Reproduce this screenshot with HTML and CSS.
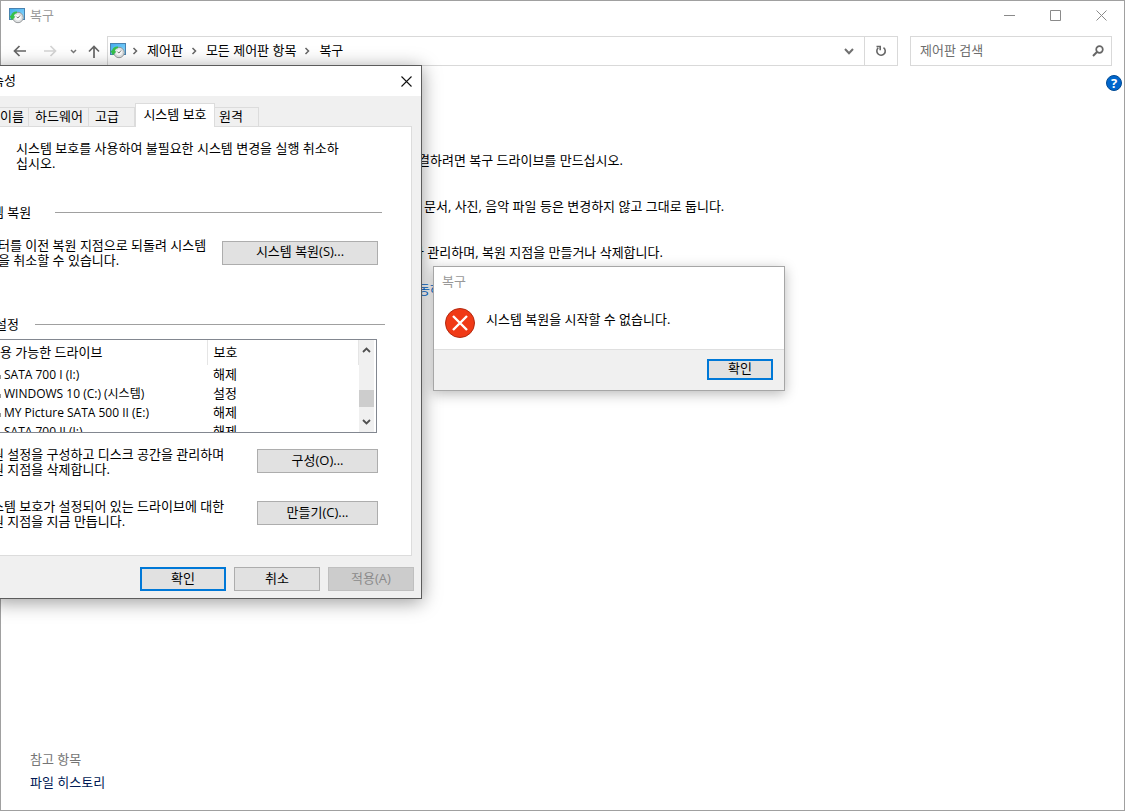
FILE: index.html
```html
<!DOCTYPE html>
<html lang="ko">
<head>
<meta charset="utf-8">
<title>복구</title>
<link rel="stylesheet" href="styles.css">
</head>
<body>
<svg class="defs" aria-hidden="true">
  <defs>
    <linearGradient id="screen" x1="0" y1="0" x2="1" y2="1">
      <stop offset="0" stop-color="#3fa9ec"/><stop offset="1" stop-color="#8fdcff"/>
    </linearGradient>
    <symbol id="recovery" viewBox="0 0 16 16">
      <rect x=".5" y=".5" width="15" height="11" fill="url(#screen)" stroke="#4a82b0"/>
      <circle cx="9" cy="9.500" r="5.200" fill="#e4e7e8" stroke="#8c9092" stroke-width=".9"/>
      <circle cx="9" cy="9.500" r="3.600" fill="#fafafa" stroke="#c4c8ca" stroke-width=".5"/>
      <path d="M9 10 11 7.500M9 10 7.500 8.800" stroke="#555" stroke-width=".8" fill="none"/>
      <path d="M8 3.500C4.500 3.300 2.500 5 2 7.800L.3 7.600 2.800 12.200 6.500 8.500 4.800 8.200C5.200 6.200 6.200 5.300 8 5.200Z" fill="#35c04a"/>
    </symbol>
    <symbol id="chev-right" viewBox="0 0 6 8"><path d="M1.500 1 4.500 4 1.500 7" fill="none" stroke="#666" stroke-width="1.500"/></symbol>
  </defs>
</svg>

<main class="window">
  <header class="titlebar">
    <svg class="app-icon"><use href="#recovery"/></svg>
    <h1 class="caption">복구</h1>
    <div class="sysbuttons">
      <button class="sysbtn" aria-label="최소화"><svg width="11" height="11"><path d="M0 5.500H11" stroke="#8a8a8a"/></svg></button>
      <button class="sysbtn" aria-label="최대화"><svg width="11" height="11"><path d="M.5.5H10.500V10.500H.5Z" fill="none" stroke="#8a8a8a"/></svg></button>
      <button class="sysbtn" aria-label="닫기"><svg width="11" height="11"><path d="M.5.5 10.500 10.500M10.500.5.5 10.500" stroke="#8a8a8a"/></svg></button>
    </div>
  </header>

  <nav class="navbar">
    <div class="navbuttons">
      <button class="navbtn" aria-label="뒤로"><svg width="14" height="12"><path d="M6.500 1 1.500 6 6.500 11M1.500 6H13" fill="none" stroke="#666" stroke-width="1.700"/></svg></button>
      <button class="navbtn" aria-label="앞으로"><svg width="14" height="12"><path d="M7.500 1 12.500 6 7.500 11M12.500 6H1" fill="none" stroke="#d4d4d4" stroke-width="1.700"/></svg></button>
      <button class="navbtn narrow" aria-label="최근 위치"><svg width="7" height="5"><path d="M1 1 3.500 3.500 6 1" fill="none" stroke="#777" stroke-width="1.500"/></svg></button>
      <button class="navbtn up" aria-label="위로"><svg width="12" height="13"><path d="M1 6.500 6 1.500 11 6.500M6 1.500V13" fill="none" stroke="#666" stroke-width="1.700"/></svg></button>
    </div>
    <div class="address">
      <svg class="app-icon"><use href="#recovery"/></svg>
      <svg class="sep"><use href="#chev-right"/></svg>
      <a class="crumb" href="#">제어판</a>
      <svg class="sep"><use href="#chev-right"/></svg>
      <a class="crumb" href="#">모든 제어판 항목</a>
      <svg class="sep"><use href="#chev-right"/></svg>
      <a class="crumb" href="#">복구</a>
      <button class="drop" aria-label="이전 위치"><svg width="10" height="7"><path d="M1 1 5 5.300 9 1" fill="none" stroke="#707070" stroke-width="2"/></svg></button>
      <button class="refresh" aria-label="새로 고침"><svg width="12" height="12" viewBox="0 0 12 12"><path d="M8.500 2.600A4.200 4.200 0 1 1 3.200 2.900M1.500 1.500H5.200V5.200" fill="none" stroke="#666" stroke-width="1.600"/></svg></button>
    </div>
    <div class="search">
      <input class="search-input" type="text" placeholder="제어판 검색" aria-label="제어판 검색">
      <svg width="12" height="12"><circle cx="7.500" cy="4.500" r="3.300" fill="none" stroke="#666" stroke-width="1.700"/><path d="M5.200 6.800 1 11" stroke="#666" stroke-width="2"/></svg>
    </div>
  </nav>

  <div class="help-row"><button class="help" aria-label="도움말">?</button></div>

  <section class="tasks">
    <p class="task">결하려면 복구 드라이브를 만드십시오.</p>
    <p class="task indent">문서, 사진, 음악 파일 등은 변경하지 않고 그대로 둡니다.</p>
    <p class="task outdent">가 관리하며, 복원 지점을 만들거나 삭제합니다.</p>
    <a class="tasklink" href="#">동하</a>
  </section>

  <footer class="seealso">
    <h2 class="seealso-title">참고 항목</h2>
    <a class="seealso-link" href="#">파일 히스토리</a>
  </footer>
</main>

<section class="props" role="dialog" aria-labelledby="props-title">
  <header class="props-title">
    <h2 class="props-caption" id="props-title">속성</h2>
    <button class="close" aria-label="닫기"><svg width="11" height="11"><path d="M.5.5 10.500 10.500M10.500.5.5 10.500" stroke="#111" stroke-width="1.100"/></svg></button>
  </header>
  <div class="tabs" role="tablist">
    <button class="tab t1" role="tab">이름</button>
    <button class="tab t2" role="tab">하드웨어</button>
    <button class="tab t3" role="tab">고급</button>
    <button class="tab active" role="tab" aria-selected="true">시스템 보호</button>
    <button class="tab t5" role="tab">원격</button>
  </div>
  <div class="page" role="tabpanel">
    <p class="intro">시스템 보호를 사용하여 불필요한 시스템 변경을 실행 취소하<br>십시오.</p>
    <h3 class="group">템 복원</h3>
    <div class="row restore">
      <p class="text">터를 이전 복원 지점으로 되돌려 시스템<br>을 취소할 수 있습니다.</p>
      <button class="btn wide">시스템 복원(S)...</button>
    </div>
    <h3 class="group settings">설정</h3>
    <div class="list">
      <table class="drives">
        <thead><tr><th class="name">용 가능한 드라이브</th><th>보호</th></tr></thead>
        <tbody>
          <tr><td class="drive">SATA 700 I (I:)</td><td>해제</td></tr>
          <tr><td class="drive">WINDOWS 10 (C:) (시스템)</td><td>설정</td></tr>
          <tr><td class="drive">MY Picture SATA 500 II (E:)</td><td>해제</td></tr>
          <tr><td class="drive">SATA 700 II (J:)</td><td>해제</td></tr>
        </tbody>
      </table>
      <div class="scroll">
        <svg width="9" height="6"><path d="M1 5 4.500 1.500 8 5" fill="none" stroke="#505050" stroke-width="1.800"/></svg>
        <div class="thumb"></div>
        <svg width="9" height="6"><path d="M1 1 4.500 4.500 8 1" fill="none" stroke="#505050" stroke-width="1.800"/></svg>
      </div>
    </div>
    <div class="row config">
      <p class="text">원 설정을 구성하고 디스크 공간을 관리하며<br>원 지점을 삭제합니다.</p>
      <button class="btn mid">구성(O)...</button>
    </div>
    <div class="row create">
      <p class="text">스템 보호가 설정되어 있는 드라이브에 대한<br>원 지점을 지금 만듭니다.</p>
      <button class="btn mid">만들기(C)...</button>
    </div>
  </div>
  <footer class="actions">
    <button class="btn std primary">확인</button>
    <button class="btn std">취소</button>
    <button class="btn std" disabled>적용(A)</button>
  </footer>
</section>

<section class="alert" role="alertdialog" aria-labelledby="alert-title">
  <h2 class="alert-title" id="alert-title">복구</h2>
  <div class="alert-body">
    <svg width="32" height="32"><circle cx="16" cy="16" r="14.500" fill="#f03a17" stroke="#b32a10"/><path d="M9 9 23 23M23 9 9 23" stroke="#fff" stroke-width="2.400"/></svg>
    <p class="alert-text">시스템 복원을 시작할 수 없습니다.</p>
  </div>
  <footer class="alert-actions"><button class="btn small primary">확인</button></footer>
</section>
</body>
</html>
```
FILE: styles.css
```css
* { box-sizing: border-box; }
body, button, input {
  font-family: "Open Sans", "Noto Sans CJK KR", sans-serif;
  font-size: 13px;
  line-height: 15px;
}
body { margin: 0; color: #000; background: #fff; }
h1, h2, h3, p { margin: 0; font-size: 13px; font-weight: 400; }
button { border: 0; padding: 0; background: none; color: inherit; }
a { color: inherit; text-decoration: none; }
svg { display: block; flex: none; }
.defs { position: absolute; width: 0; height: 0; }

.window {
  display: flex;
  flex-direction: column;
  min-height: 100vh;
  border: 1px solid #a0a0a0;
}
.titlebar { display: flex; align-items: center; height: 29px; padding-left: 8px; gap: 5px; }
.app-icon { width: 16px; height: 16px; }
.caption { color: #999; flex: 1; }
.sysbuttons { display: flex; }
.sysbtn { display: grid; place-items: center; width: 46px; height: 29px; }

.navbar { display: flex; height: 30px; margin: 6px 12px 0 0; }
.navbuttons { display: flex; align-items: center; padding-left: 4px; width: 106px; }
.navbtn { display: grid; place-items: center; width: 30px; height: 30px; }
.navbtn.narrow { width: 16px; }
.navbtn.up { width: 26px; }
.address { display: flex; flex: 1; align-items: center; border: 1px solid #d9d9d9; padding-left: 2px; }
.sep { width: 6px; height: 8px; margin: 0 9px 0 6px; }
.crumb { margin-right: 2px; padding-bottom: 2px; }
.drop { display: grid; place-items: center; width: 30px; height: 28px; margin-left: auto; }
.refresh { display: grid; place-items: center; width: 33px; height: 28px; border-left: 1px solid #d9d9d9; }
.search { display: flex; align-items: center; width: 202px; margin-left: 12px; padding: 0 7px 0 9px; border: 1px solid #d9d9d9; }
.search-input { flex: 1; min-width: 0; border: 0; padding: 0 0 2px; outline: 0; }
.search-input::placeholder { color: #6d6d6d; }

.help-row { display: flex; justify-content: flex-end; padding: 9px 2px 0 0; }
.help {
  width: 16px; height: 16px; border-radius: 8px;
  background: #0066cc; border: 1px solid #004a94; color: #fff;
  font-weight: 700; line-height: 14px;
}
.tasks { display: flex; flex-direction: column; align-items: flex-start; padding: 62px 0 0 417px; }
.task { margin-bottom: 31px; }
.task.indent { padding-left: 6px; }
.task.outdent { margin-left: -6px; margin-bottom: 22px; }
.tasklink { color: #0066cc; }
.seealso { display: flex; flex-direction: column; gap: 8px; margin-top: auto; padding: 0 0 20px 29px; }
.seealso-title { color: #757575; }
.seealso-link { color: #001a55; }

.props {
  position: absolute; left: -8px; top: 65px; width: 430px;
  border: 1px solid #5c5c5c; border-left: 0;
  background: #f0f0f0;
  box-shadow: 0 3px 18px rgba(0, 0, 0, .4);
}
.props-title { display: flex; justify-content: space-between; align-items: center; height: 30px; background: #fff; }
.props-caption { padding-bottom: 2px; }
.close { display: grid; place-items: center; width: 30px; height: 28px; }
.tabs { display: flex; align-items: flex-end; height: 30px; margin: 1px 0 -1px; position: relative; }
.tab { height: 20px; padding-bottom: 2px; border: 1px solid #dcdcdc; border-bottom: 0; border-left: 0; text-align: left; }
.t1 { width: 37px; padding-left: 8px; }
.t2 { width: 60px; padding-left: 6px; }
.t3 { width: 46px; padding-left: 6px; }
.tab.active { height: 24px; width: 80px; background: #fff; border-left: 1px solid #dcdcdc; text-align: center; }
.t5 { width: 44px; padding-left: 4px; }
.page { margin-right: 9px; padding: 14px 0 24px; background: #fff; border: 1px solid #dcdcdc; border-left: 0; }
.intro { padding-left: 24px; }
.group { display: flex; align-items: center; gap: 24px; margin: 34px 29px 17px 0; }
.group::after { content: ""; flex: 1; height: 1px; background: #a0a0a0; }
.group.settings { margin: 49px 26px 7px 3px; gap: 16px; }
.row { display: flex; justify-content: space-between; align-items: center; height: 36px; margin-right: 33px; }
.row.config { margin-top: 10px; }
.row.create { margin-top: 16px; }
.row.restore { height: auto; padding-left: 6px; }
.text { white-space: nowrap; padding-top: 1px; }
.btn { height: 24px; padding-bottom: 2px; background: #e1e1e1; border: 1px solid #adadad; }
.wide { width: 156px; }
.mid { width: 121px; }
.std { width: 86px; }
.small { width: 66px; height: 21px; }
.primary { border: 2px solid #0078d7; }
.btn:disabled { background: #ccc; border-color: #bfbfbf; color: #8a8a8a; }

.list { display: flex; height: 94px; margin-right: 34px; border: 1px solid #828790; border-left: 0; overflow: hidden; }
.drives { flex: 1; border-collapse: collapse; table-layout: fixed; align-self: flex-start; }
.drives th, .drives td { height: 19px; padding: 0 0 0 6px; font-weight: 400; text-align: left; white-space: nowrap; }
.drives th { height: 25px; border-right: 1px solid #e5e5e5; }
.drives .name { width: 215px; padding-left: 8px; }
.drives .drive {
  padding-left: 12px;
  font-size: 12px;
  background: linear-gradient(#999, #999) 7px 10px / 2px 4px no-repeat;
}
.scroll { display: flex; flex-direction: column; align-items: center; width: 17px; padding: 7px 0; border-right: 2px solid #fff; background: #f0f0f0; }
.thumb { width: 15px; height: 17px; margin: auto 0 12px; background: #cdcdcd; }

.actions { display: flex; justify-content: flex-end; gap: 8px; padding: 11px 7px 7px; }

.alert {
  position: absolute; left: 433px; top: 266px; width: 352px;
  border: 1px solid #a6a6a6; background: #fff;
  box-shadow: 0 3px 12px rgba(0, 0, 0, .28);
}
.alert-title { padding: 7px 8px; color: #999; }
.alert-body { display: flex; gap: 10px; padding: 11px 10px 10px; }
.alert-text { padding-top: 5px; }
.alert-actions { display: flex; justify-content: flex-end; padding: 9px 11px 10px; background: #f0f0f0; border-top: 1px solid #dfdfdf; }
```
